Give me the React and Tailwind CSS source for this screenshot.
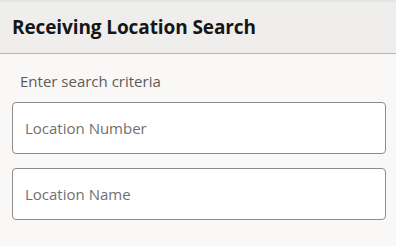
export default function App() {
  return (
    <div className="w-[396px] h-[246px] bg-[#f9f8f6] font-['Open_Sans',sans-serif] overflow-hidden">
      <div className="h-[54px] bg-[#efeeec] border-t-2 border-t-[#e3e5e3] border-b border-b-[#b5b5b5] flex items-center px-3">
        <h1 className="text-[19px] font-bold text-[#161616] tracking-[-0.1px]">Receiving Location Search</h1>
      </div>
      <div className="px-3 pt-[17px]">
        <p className="pl-2 text-[15px] font-medium text-[#5b5b5b] leading-[20px]">Enter search criteria</p>
        <div className="mt-[11px] flex flex-col gap-[14px]">
          <input
            type="text"
            placeholder="Location Number"
            className="w-[374px] h-[52px] bg-white border border-[#8c8c8c] rounded-[4px] px-3 text-[15px] placeholder:text-[#707070] outline-none"
          />
          <input
            type="text"
            placeholder="Location Name"
            className="w-[374px] h-[52px] bg-white border border-[#8c8c8c] rounded-[4px] px-3 text-[15px] placeholder:text-[#707070] outline-none"
          />
        </div>
      </div>
    </div>
  );
}
